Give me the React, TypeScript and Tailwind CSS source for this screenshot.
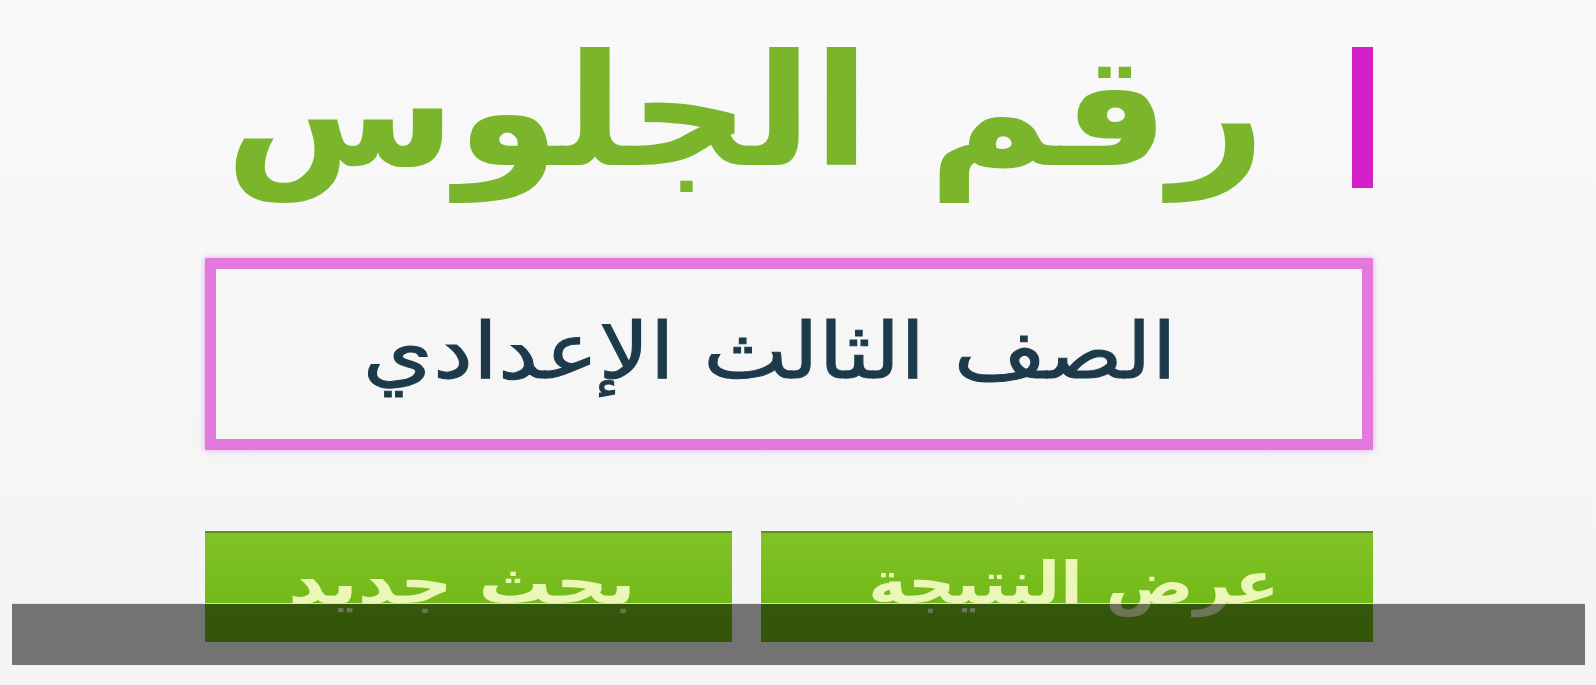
import React from "react";

const arabicFont = { fontFamily: '"DejaVu Sans", sans-serif' };

export default function App() {
  return (
    <div
      dir="rtl"
      className="relative w-[1596px] h-[685px] overflow-hidden bg-gradient-to-b from-[#f9f9f9] to-[#f4f4f4]"
      style={arabicFont}
    >
      <div className="w-[1168px] mr-[223px] flex flex-col">
        {/* heading with accent bar */}
        <div className="flex items-start pt-[47px] h-[258px]">
          <div className="w-[21px] h-[141px] bg-[#d41fca] shrink-0" />
          <h1 className="mr-[86px] mt-[-13px] text-[155px] leading-none font-bold text-[#7bb52c] whitespace-nowrap scale-x-[1.08] origin-right">
            رقم الجلوس
          </h1>
        </div>

        {/* selected grade */}
        <div className="h-[192px] border-[11px] border-[#e27ade] bg-[#f6f6f6] shadow-[0_0_6px_rgba(226,122,222,0.7)] flex items-center justify-start pr-[185px]">
          <span className="text-[78px] leading-none font-normal text-[#1d3a4b] -mt-[6px] whitespace-nowrap scale-x-[1.15] origin-right [-webkit-text-stroke:1px_#1d3a4b]">
            الصف الثالث الإعدادي
          </span>
        </div>

        {/* actions */}
        <div className="flex gap-[29px] mt-[81px]">
          <button className="w-[612px] h-[111px] bg-gradient-to-b from-[#80c324] to-[#6cb512] border-t-2 border-[#5f8f1e] flex justify-center pt-[21px] text-[58px] leading-none font-bold text-[#eaf7b6]">
            <span className="scale-x-[1.13] translate-x-[7px]">عرض النتيجة</span>
          </button>
          <button className="w-[527px] h-[111px] bg-gradient-to-b from-[#80c324] to-[#6cb512] border-t-2 border-[#5f8f1e] flex justify-center pt-[21px] text-[58px] leading-none font-bold text-[#eaf7b6]">
            <span className="scale-x-[1.26] -translate-x-[7px]">بحث جديد</span>
          </button>
        </div>
      </div>

      {/* caption strip laid over the page */}
      <div className="absolute left-[12px] top-[603px] w-[1573px] h-[62px] bg-black/[0.53] border-t border-white/80" />
    </div>
  );
}
